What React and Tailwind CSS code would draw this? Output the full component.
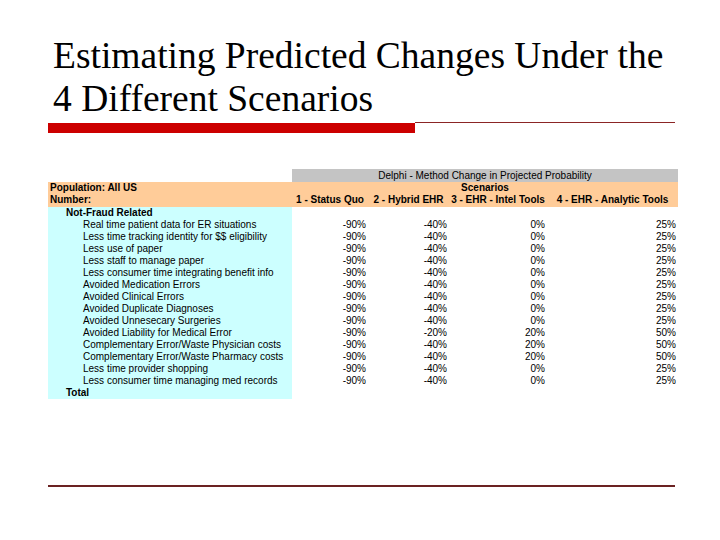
const rows = [
  ['Real time patient data for ER situations', '-90%', '-40%', '0%', '25%'],
  ['Less time tracking identity for $$ eligibility', '-90%', '-40%', '0%', '25%'],
  ['Less use of paper', '-90%', '-40%', '0%', '25%'],
  ['Less staff to manage paper', '-90%', '-40%', '0%', '25%'],
  ['Less consumer time integrating benefit info', '-90%', '-40%', '0%', '25%'],
  ['Avoided Medication Errors', '-90%', '-40%', '0%', '25%'],
  ['Avoided Clinical Errors', '-90%', '-40%', '0%', '25%'],
  ['Avoided Duplicate Diagnoses', '-90%', '-40%', '0%', '25%'],
  ['Avoided Unnesecary Surgeries', '-90%', '-40%', '0%', '25%'],
  ['Avoided Liability for Medical Error', '-90%', '-20%', '20%', '50%'],
  ['Complementary Error/Waste Physician costs', '-90%', '-40%', '20%', '50%'],
  ['Complementary Error/Waste Pharmacy costs', '-90%', '-40%', '20%', '50%'],
  ['Less time provider shopping', '-90%', '-40%', '0%', '25%'],
  ['Less consumer time managing med records', '-90%', '-40%', '0%', '25%'],
]

function Row({ label, vals, indent = 'pl-[35px]', bold = false }) {
  return (
    <div className="grid grid-cols-[244px_76px_81px_98px_131px] h-[12px] leading-[12px]">
      <div className={`bg-[#ccffff] ${indent} ${bold ? 'font-bold' : ''} whitespace-nowrap`}>{label}</div>
      {(vals || ['', '', '', '']).map((v, i) => (
        <div key={i} className="text-right pr-[2px]">{v}</div>
      ))}
    </div>
  )
}

export default function App() {
  return (
    <div className="w-[720px] h-[540px] bg-white relative overflow-hidden">
      <div className="pl-[53px] pt-[34px]">
        <h1 className="font-['Liberation_Serif',serif] text-[37.5px] leading-[43px] text-black whitespace-nowrap">
          Estimating Predicted Changes Under the
          <br />4 Different Scenarios
        </h1>
      </div>

      <div className="ml-[48px] mt-[2px] w-[627px] flex items-start">
        <div className="w-[367px] h-[10px] bg-[#cc0000] mt-[1px]" />
        <div className="flex-1 h-[1px] bg-[#8b2525]" />
      </div>

      <div className="ml-[48px] mt-[36px] w-[630px] font-['Liberation_Sans',Arial,sans-serif] text-[10px] text-black">
        <div className="grid grid-cols-[244px_386px] h-[13px] leading-[13px]">
          <div />
          <div className="bg-[#c4c4c4] text-center">Delphi - Method Change in Projected Probability</div>
        </div>
        <div className="bg-[#ffcc99] font-bold">
          <div className="grid grid-cols-[244px_386px] h-[12px] leading-[12px]">
            <div className="pl-[2px]">Population: All US</div>
            <div className="text-center">Scenarios</div>
          </div>
          <div className="grid grid-cols-[244px_76px_81px_98px_131px] h-[13px] leading-[12px]">
            <div className="pl-[2px]">Number:</div>
            <div className="text-center">1 - Status Quo</div>
            <div className="text-center">2 - Hybrid EHR</div>
            <div className="text-center">3 - EHR - Intel Tools</div>
            <div className="text-center">4 - EHR - Analytic Tools</div>
          </div>
        </div>
        <Row label="Not-Fraud Related" indent="pl-[18px]" bold />
        {rows.map((r) => (
          <Row key={r[0]} label={r[0]} vals={r.slice(1)} />
        ))}
        <Row label="Total" indent="pl-[18px]" bold />
      </div>

      <div className="absolute left-[48px] top-[485px] w-[627px] h-[2px] bg-[#6b2222]" />
    </div>
  )
}
